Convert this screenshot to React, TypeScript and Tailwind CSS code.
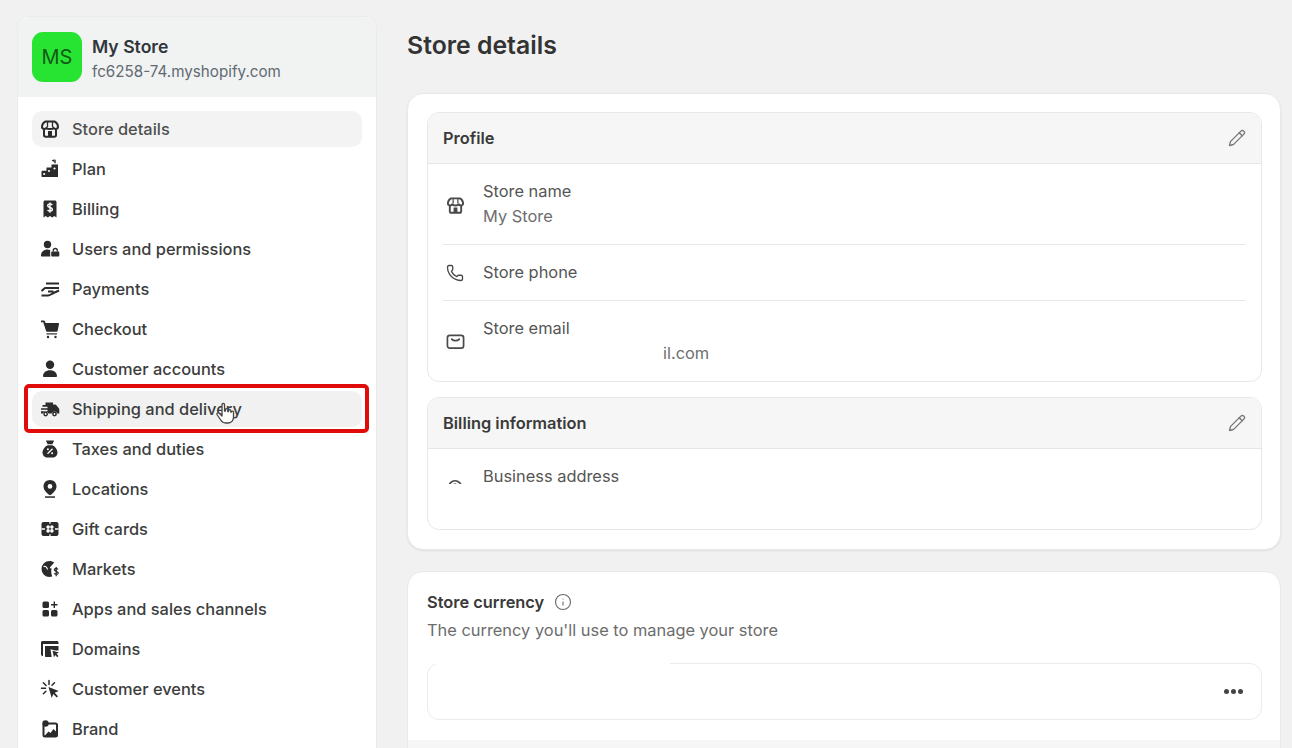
import { Info, Pencil, Phone } from "lucide-react";
import type { ReactNode } from "react";

const Glyph = ({ children, className = "w-5 h-5" }: { children: ReactNode; className?: string }) => (
  <svg viewBox="0 0 20 20" fill="currentColor" className={className}>
    {children}
  </svg>
);

const storeShape = (
  <>
    <path d="M5.500 2.500h9c2 .8 3.200 2.600 3.500 5 .2 2.600-3.300 3.300-4.500 1.200-1 1.800-6 1.800-7 0C5.300 10.800 1.800 10.100 2 7.500c.3-2.400 1.500-4.200 3.500-5z" fill="none" stroke="currentColor" strokeWidth="2" strokeLinejoin="round" />
    <path d="M7.500 3v5M12.500 3v5" fill="none" stroke="currentColor" strokeWidth="1.300" />
    <path d="M4 10.500v5.500c0 1 .6 1.700 1.700 1.700h8.600c1.100 0 1.700-.7 1.700-1.700v-5.500" fill="none" stroke="currentColor" strokeWidth="2" />
    <path d="M8 12h4v5.500H8z" />
  </>
);

const navItems: { label: string; icon: ReactNode; active?: boolean; hover?: boolean }[] = [
  { label: "Store details", active: true, icon: storeShape },
  {
    label: "Plan",
    icon: (
      <>
        <path d="M14.300.8h1.400v3.500h-1.400zM11.500 1.500l3 1.800v-3z" />
        <path d="M1.500 13c0-.8.500-1.300 1.300-1.300h3.700V8.500h5V5.500h6.500V18H2.500c-.6 0-1-.4-1-1z" />
        <circle cx="4.200" cy="15" r="1.100" fill="#fff" />
        <circle cx="9" cy="12" r="1.100" fill="#fff" />
        <circle cx="14.500" cy="9.500" r="1.100" fill="#fff" />
      </>
    ),
  },
  {
    label: "Billing",
    icon: (
      <>
        <path d="M5 1.500h10c.8 0 1.500.7 1.500 1.500v15.500l-2.200-1.600-2.100 1.600-2.200-1.600-2.200 1.600-2.100-1.600-2.200 1.600V3c0-.8.700-1.500 1.500-1.500z" />
        <path d="M12.300 6c-.5-.7-1.300-1.100-2.300-1.100-1.200 0-2.300.6-2.300 1.800 0 2.300 4.700 1.200 4.700 3.500 0 1.200-1.100 1.800-2.400 1.800-1 0-1.900-.4-2.400-1.200M10 3.500v10.200" fill="none" stroke="#fff" strokeWidth="1.400" />
      </>
    ),
  },
  {
    label: "Users and permissions",
    icon: (
      <>
        <circle cx="7.500" cy="5.500" r="3.700" />
        <path d="M1 16.500c0-3.500 2.700-6 6.500-6 1 0 1.900.2 2.700.5v6.500H2c-.6 0-1-.4-1-1z" />
        <path d="M12 12.500h6.500c.5 0 .8.300.8.800v3.500c0 .5-.3.700-.8.700H12c-.5 0-.8-.2-.8-.7v-3.500c0-.5.300-.8.800-.8z" />
        <path d="M13.300 12.500v-1a2 2 0 0 1 4 0v1" fill="none" stroke="currentColor" strokeWidth="1.300" />
      </>
    ),
  },
  {
    label: "Payments",
    icon: (
      <path d="M6 4.500h13M1.500 12l3.500-3h14M8 12.500h5.500M1.500 16.500H8c2 0 3.500-1.500 5.500-2.500l5.500-2.500" fill="none" stroke="currentColor" strokeWidth="2" strokeLinejoin="round" />
    ),
  },
  {
    label: "Checkout",
    icon: (
      <>
        <path d="M1 1.500h2.800c.6 0 1 .3 1.200.9l.5 1.600h12.700c.6 0 .9.500.8 1l-1.300 6.700c-.2.700-.6 1-1.200 1H7.200c-.6 0-1-.3-1.200-.9L3.200 3.300H1z" />
        <path d="M6.500 14.300h10.500v1.200H6.500z" />
        <circle cx="8" cy="18" r="1.200" />
        <circle cx="15.500" cy="18" r="1.200" />
      </>
    ),
  },
  {
    label: "Customer accounts",
    icon: (
      <>
        <circle cx="10" cy="5.800" r="4.200" />
        <path d="M3 17.200c0-3.800 3-6 7-6s7 2.200 7 6c0 .5-.4.800-.9.800H3.900c-.5 0-.9-.3-.9-.8z" />
      </>
    ),
  },
  {
    label: "Shipping and delivery",
    hover: true,
    icon: (
      <>
        <path d="M5.500 3.500h7.500v2h2c.5 0 .9.200 1.200.6l2.600 3.100c.3.300.5.700.5 1.200v4.100h-2a3 3 0 0 0-5.600 0H8.400a3 3 0 0 0-5.600 0H1v-2.300h6.500v-1.400H1V9.200h6.500V7.800h-5V6.100h3z" />
        <circle cx="5.600" cy="15" r="2.400" />
        <circle cx="14.500" cy="15" r="2.400" />
        <circle cx="5.600" cy="15" r=".9" fill="#fff" />
        <circle cx="14.500" cy="15" r=".9" fill="#fff" />
      </>
    ),
  },
  {
    label: "Taxes and duties",
    icon: (
      <>
        <path d="M6.500 1.500h7c.4 0 .6.400.4.700L12.300 5.300H7.700L6.100 2.200c-.2-.3 0-.7.400-.7z" />
        <path d="M7.500 6.300h5c2.600 1.400 5 4.100 5 7.200 0 3-2.400 5-5 5h-5c-2.600 0-5-2-5-5 0-3.100 2.400-5.800 5-7.200z" />
        <path d="M7.500 14.700l5-5" stroke="#fff" strokeWidth="1.300" />
        <circle cx="7.900" cy="10.200" r="1" fill="#fff" />
        <circle cx="12.100" cy="14.200" r="1" fill="#fff" />
      </>
    ),
  },
  {
    label: "Locations",
    icon: (
      <>
        <path fillRule="evenodd" d="M10 1c3.700 0 6.500 2.800 6.500 6.400 0 3.400-3.300 6.500-5.500 8.300-.6.500-1.400.5-2 0-2.200-1.800-5.500-4.900-5.500-8.300C3.500 3.800 6.300 1 10 1zm0 4a2.400 2.400 0 1 0 0 4.800A2.400 2.400 0 0 0 10 5z" />
        <path d="M5 17.300h10v1.500H5z" />
      </>
    ),
  },
  {
    label: "Gift cards",
    icon: (
      <>
        <path d="M3.500 3h13c1.100 0 2 .9 2 2v10c0 1.100-.9 2-2 2h-13c-1.100 0-2-.9-2-2V5c0-1.100.9-2 2-2z" />
        <circle cx="8.100" cy="8.100" r="1.800" fill="#fff" />
        <circle cx="11.900" cy="8.100" r="1.800" fill="#fff" />
        <circle cx="8.100" cy="11.900" r="1.800" fill="#fff" />
        <circle cx="11.900" cy="11.900" r="1.800" fill="#fff" />
        <path d="M1.500 10h3.500m10 0h3.500M10 3v1.800m0 10.400V17" fill="none" stroke="#fff" strokeWidth="1.300" />
      </>
    ),
  },
  {
    label: "Markets",
    icon: (
      <>
        <path d="M9.500 2c1.800 0 3.500.6 4.800 1.600L10.200 8c-.5.600-.1 1.500.7 1.500h.8c-.4 1-.7 3.500 0 6.300l.5 1.800c-.8.300-1.700.4-2.700.4A8 8 0 0 1 9.500 2z" />
        <path d="M3.500 7.500c2-.5 3.500.5 4 3" fill="none" stroke="#fff" strokeWidth="1.200" />
        <path d="M18 10.500c-.4-.8-1-1.200-1.800-1.200-1 0-1.800.6-1.800 1.500 0 2 3.800 1 3.800 3.100 0 .9-.9 1.500-2 1.500-.9 0-1.600-.4-2-1.100M16.200 8v9.200" fill="none" stroke="currentColor" strokeWidth="1.300" />
      </>
    ),
  },
  {
    label: "Apps and sales channels",
    icon: (
      <>
        <rect x="2.500" y="2.500" width="6.500" height="6.500" rx="1.500" />
        <rect x="2.500" y="11" width="6.500" height="6.500" rx="1.500" />
        <rect x="11" y="11" width="6.500" height="6.500" rx="1.500" />
        <path d="M13.600 2.500h1.400v2.600h2.500v1.400H15V9h-1.400V6.500H11V5.100h2.600z" />
      </>
    ),
  },
  {
    label: "Domains",
    icon: (
      <>
        <path d="M1 3.500c0-1 .7-1.500 1.500-1.500h14.500c.9 0 1.500.6 1.500 1.500v1.500H3v12c-1.200 0-2-.6-2-1.500z" />
        <path d="M5 7h13.500v4.500h-3.300l-4.700-1.200L11.700 18H6c-.6 0-1-.4-1-1z" />
        <path d="M12.500 11.700l6.500 1.800-2.500 1.300 2 2.200-1.300 1.200-2-2.200-1.200 2.500z" />
      </>
    ),
  },
  {
    label: "Customer events",
    icon: (
      <>
        <path d="M8.500 8l10.200 4-4 1.700 3.300 3.500-1.300 1.300-3.400-3.500-1.600 4z" />
        <path d="M9 1.500v4M3.300 3.700l2.800 2.800M1.500 9.200h4M3.300 14.800l2.600-2.600M14.500 3.800l-2.500 2.500" fill="none" stroke="currentColor" strokeWidth="1.500" strokeLinecap="round" />
      </>
    ),
  },
  {
    label: "Brand",
    icon: (
      <>
        <rect x="3.500" y="4.500" width="13.500" height="13" rx="1.500" fill="none" stroke="currentColor" strokeWidth="2" />
        <path d="M4.500 17l4-4.500 2 1.500 3-4 3.500 3.500V18H4.500z" />
        <circle cx="5.500" cy="4.500" r="3.200" />
      </>
    ),
  },
];

const NavRow = ({ label, icon, active, hover }: (typeof navItems)[number]) => (
  <div
    className={`flex items-center h-9 pl-[8px] rounded-[10px] ${
      active ? "bg-[#f3f3f3] text-[#505050]" : hover ? "bg-[#f1f1f1] text-[#3d3d3d]" : "text-[#3d3d3d]"
    }`}
  >
    <span className="text-[#2b2b2b] w-5 h-5 shrink-0">
      <Glyph>{icon}</Glyph>
    </span>
    <span className="ml-[12px] text-[16.4px] font-medium">{label}</span>
  </div>
);

const SectionHead = ({ title, h }: { title: string; h: string }) => (
  <div className={`flex items-center justify-between px-[15px] bg-[#f6f6f6] border-b border-[#e6e6e6] ${h}`}>
    <span className="text-[16.4px] font-semibold text-[#3a3a3a]">{title}</span>
    <Pencil className="w-[18px] h-[18px] text-[#777777]" strokeWidth={1.8} />
  </div>
);

const InfoRow = ({ icon, children, border = true, h }: { icon: ReactNode; children: ReactNode; border?: boolean; h: string }) => (
  <div className={`flex items-center ${h} ${border ? "border-b border-[#e8e8e8]" : ""}`}>
    <span className="w-[40px] pl-[3px] shrink-0 text-[#4a4a4a]">{icon}</span>
    <div className="text-[16.4px] leading-[25px] text-[#555555]">{children}</div>
  </div>
);

export default function App() {
  return (
    <div className="relative flex w-[1292px] h-[748px] overflow-hidden bg-[#f1f1f1] font-['Inter',sans-serif]">
      {/* sidebar */}
      <aside className="mt-[16px] ml-[17px] w-[360px] shrink-0 rounded-t-[12px] bg-white border border-[#ebebeb] border-b-0 self-stretch -mb-4">
        <div className="flex items-center gap-[10px] h-[80px] px-[14px] bg-[#f1f2f2] rounded-t-[12px]">
          <div className="flex items-center justify-center w-[50px] h-[50px] rounded-[11px] bg-[#28e432] text-[#115a18] text-[20px]">
            MS
          </div>
          <div className="mt-[4px]">
            <div className="text-[17.6px] leading-[26px] font-semibold text-[#30363c]">My Store</div>
            <div className="text-[15.2px] leading-[24px] text-[#626a72]">fc6258-74.myshopify.com</div>
          </div>
        </div>
        <nav className="flex flex-col gap-1 pt-[14px] px-[14px]">
          {navItems.map((item) => (
            <NavRow key={item.label} {...item} />
          ))}
        </nav>
      </aside>

      {/* main column */}
      <main className="ml-[30px] w-[874px] shrink-0">
        <h1 className="mt-[29px] h-[64px] text-[24.8px] leading-[32px] font-semibold text-[#333333]">Store details</h1>

        <section className="bg-white rounded-[16px] border border-[#e9e9e9] shadow-[0_1px_2px_rgba(0,0,0,0.08)] h-[457px] px-[18px] pl-[19px] pt-[18px]">
          <div className="rounded-[12px] border border-[#e8e8e8] overflow-hidden h-[270px]">
            <SectionHead title="Profile" h="h-[51px]" />
            <div className="px-[15px]">
              <InfoRow h="h-[81px]" icon={<Glyph className="w-[19px] h-[19px] mt-[2px]">{storeShape}</Glyph>}>
                Store name
                <div className="text-[#6e6e6e]">My Store</div>
              </InfoRow>
              <InfoRow h="h-[56px]" icon={<Phone className="w-[18px] h-[18px]" strokeWidth={1.8} />}>
                Store phone
              </InfoRow>
              <InfoRow
                h="h-[79px]"
                border={false}
                icon={
                  <svg viewBox="0 0 20 20" fill="none" stroke="currentColor" strokeWidth="1.8" className="w-[19px] h-[19px] mt-[2px]">
                    <rect x="1.5" y="3.500" width="17" height="13.500" rx="2.500" />
                    <path d="M6 7.500c2 2.200 6 2.200 8 0" strokeLinecap="round" />
                  </svg>
                }
              >
                Store email
                <div className="pl-[180px] text-[#6e6e6e]">il.com</div>
              </InfoRow>
            </div>
          </div>

          <div className="mt-[15px] rounded-[12px] border border-[#e8e8e8] overflow-hidden h-[133px]">
            <SectionHead title="Billing information" h="h-[51px]" />
            <div className="flex px-[15px] pt-[15px] text-[16.4px] leading-[25px] text-[#555555]">
              <span className="w-[40px] pl-[4px] shrink-0 pt-[15px] text-[#4a4a4a]">
                <span className="block h-[5px] w-[20px] overflow-hidden">
                  <Glyph className="w-[18px] h-[18px]">
                    <circle cx="9" cy="9" r="7" fill="none" stroke="currentColor" strokeWidth="1.8" />
                    <circle cx="9" cy="6.500" r="1.800" />
                  </Glyph>
                </span>
              </span>
              Business address
            </div>
          </div>
        </section>

        <section className="mt-[21px] bg-white rounded-[16px] border border-[#e9e9e9] h-[200px] overflow-hidden">
          <div className="pl-[19px] pr-[18px] pt-[17px] h-[168px]">
            <div className="flex items-center gap-[10px] h-[26px]">
              <span className="text-[16.4px] font-semibold text-[#3a3a3a]">Store currency</span>
              <Info className="w-[18px] h-[18px] text-[#6a6a6a]" strokeWidth={1.5} />
            </div>
            <p className="mt-[1px] text-[16.4px] leading-[28px] text-[#6c6c6c]">The currency you'll use to manage your store</p>
            <div className="relative mt-[19px] h-[57px] rounded-[12px] border border-[#ebebeb] flex items-center justify-end pr-[18px]">
              <div className="absolute -top-px left-[8px] w-[234px] h-[3px] bg-white" />
              <div className="flex gap-[2px]">
                <span className="w-[5px] h-[5px] rounded-full bg-[#444444]" />
                <span className="w-[5px] h-[5px] rounded-full bg-[#444444]" />
                <span className="w-[5px] h-[5px] rounded-full bg-[#444444]" />
              </div>
            </div>
          </div>
          <div className="h-[40px] bg-[#f6f6f6]" />
        </section>
      </main>

      {/* annotation and pointer over the sidebar */}
      <div className="absolute left-[24px] top-[384px] w-[345px] h-[49px] rounded-[5px] border-[4px] border-[#e00b0b]" />
      <svg viewBox="0 0 24 24" className="absolute left-[213px] top-[400px] w-[24px] h-[26px]" fill="#fff" stroke="#444" strokeWidth="1.3" strokeLinejoin="round">
        <path d="M9 3.500c0-1.400 2.500-1.400 2.500 0V10l1 0V8.500c0-1.300 2.300-1.300 2.300 0V10.500l.8 0V9.500c0-1.300 2.200-1.300 2.200 0V11l.7 0c0-1.200 2-1.200 2 0V16c0 3.500-2.300 6-5.800 6h-2c-2.500 0-3.800-1-5-3L4 13.500c-.7-1.300 1.200-2.400 2.200-1.200L9 15z" />
      </svg>
    </div>
  );
}
